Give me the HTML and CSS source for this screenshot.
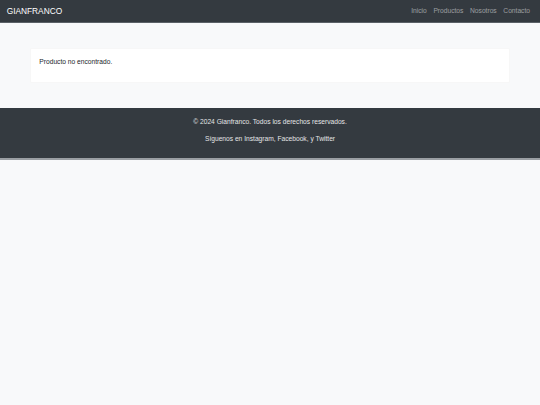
FILE: index.html
```html
<!DOCTYPE html>
<html lang="es">
<head>
<meta charset="utf-8">
<title>Gianfranco</title>
<link rel="stylesheet" href="styles.css">
</head>
<body>
<nav class="navbar">
  <a class="brand" href="#">GIANFRANCO</a>
  <ul class="nav-links">
    <li><a href="#">Inicio</a></li>
    <li><a href="#">Productos</a></li>
    <li><a href="#">Nosotros</a></li>
    <li><a href="#">Contacto</a></li>
  </ul>
</nav>
<main class="content">
  <div class="card">
    <div class="card-body">
      <p>Producto no encontrado.</p>
    </div>
  </div>
</main>
<footer class="footer">
  <p>© 2024 Gianfranco. Todos los derechos reservados.</p>
  <p>Síguenos en Instagram, Facebook, y Twitter</p>
</footer>
</body>
</html>
```

FILE: styles.css
```css
html {
  font-size: 6.6667px;
}
body {
  margin: 0;
  background: #f8f9fa;
  color: #212529;
  font-family: "Liberation Sans", Arial, sans-serif;
  font-size: 1rem;
  line-height: 1.5;
}
a {
  text-decoration: none;
}
.navbar {
  display: flex;
  justify-content: space-between;
  align-items: center;
  background: #343a40;
  padding: 0.5rem 1rem;
  border-bottom: 1px solid #5b6167;
  height: 23px;
  box-sizing: border-box;
}
.brand {
  color: #fff;
  font-size: 1.25rem;
  line-height: 1.5;
  padding: 0.3125rem 0;
}
.nav-links {
  display: flex;
  list-style: none;
  margin: 0;
  padding: 0;
}
.nav-links a {
  display: block;
  padding: 0.5rem;
  color: rgba(255, 255, 255, 0.5);
}
.content {
  padding: 25px 30px;
}
.card {
  background: #fff;
  border: 1px solid rgba(0, 0, 0, 0.03);
  border-radius: 0.25rem;
}
.card-body {
  padding: 1.25rem;
}
.card-body p {
  margin: 0 0 1rem;
}
.footer {
  background: #343a40;
  color: #e4e5e6;
  text-align: center;
  padding: 9px 0 7px;
  border-bottom: 2px solid #9a9ea3;
}
.footer p {
  margin: 0 0 1rem;
}
```
